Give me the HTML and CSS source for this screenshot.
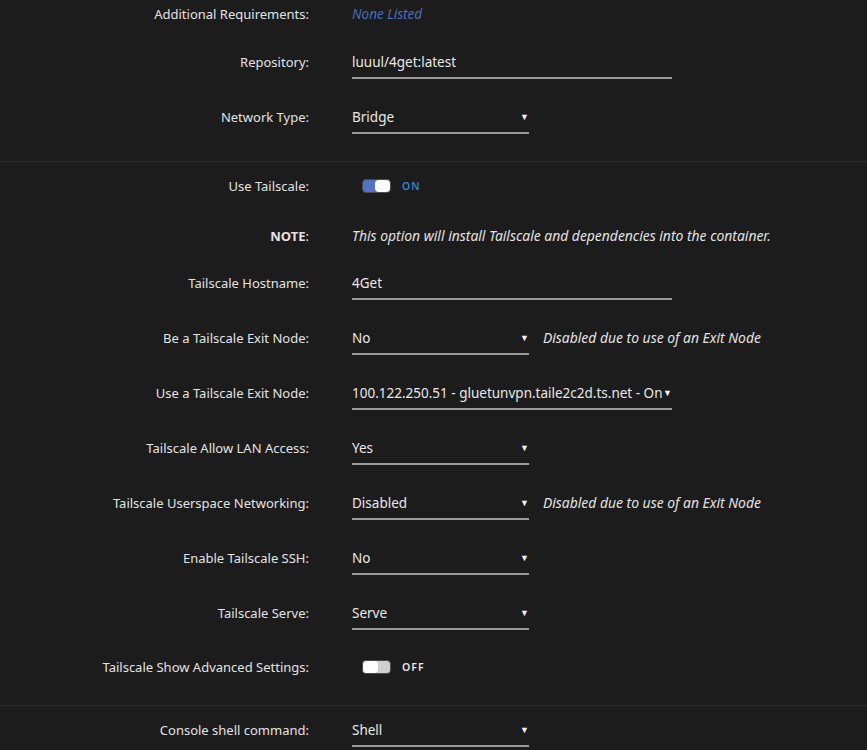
FILE: index.html
```html
<!DOCTYPE html>
<html lang="en">
<head>
    <meta charset="UTF-8">
    <title>Update Container</title>
    <link rel="stylesheet" href="styles.css">
</head>
<body>
    <form class="settings">
        <div class="row h48">
            <label class="name">Additional Requirements:</label>
            <div class="value"><span class="none-listed">None Listed</span></div>
        </div>
        <div class="row">
            <label class="name">Repository:</label>
            <div class="value"><span class="field wide">luuul/4get:latest</span></div>
        </div>
        <div class="row h54">
            <label class="name">Network Type:</label>
            <div class="value"><span class="field select">Bridge</span></div>
        </div>

        <div class="divider"></div>

        <div class="row h50">
            <label class="name">Use Tailscale:</label>
            <div class="value">
                <span class="switch on"><span class="knob"></span></span>
                <span class="switch-text on">ON</span>
            </div>
        </div>
        <div class="row h47">
            <label class="name"><b>NOTE</b>:</label>
            <div class="value"><i class="note">This option will install Tailscale and dependencies into the container.</i></div>
        </div>
        <div class="row">
            <label class="name">Tailscale Hostname:</label>
            <div class="value"><span class="field wide">4Get</span></div>
        </div>
        <div class="row">
            <label class="name">Be a Tailscale Exit Node:</label>
            <div class="value">
                <span class="field select">No</span>
                <i class="note">Disabled due to use of an Exit Node</i>
            </div>
        </div>
        <div class="row">
            <label class="name">Use a Tailscale Exit Node:</label>
            <div class="value"><span class="field select wide">100.122.250.51 - gluetunvpn.taile2c2d.ts.net - Online</span></div>
        </div>
        <div class="row">
            <label class="name">Tailscale Allow LAN Access:</label>
            <div class="value"><span class="field select">Yes</span></div>
        </div>
        <div class="row">
            <label class="name">Tailscale Userspace Networking:</label>
            <div class="value">
                <span class="field select">Disabled</span>
                <i class="note">Disabled due to use of an Exit Node</i>
            </div>
        </div>
        <div class="row">
            <label class="name">Enable Tailscale SSH:</label>
            <div class="value"><span class="field select">No</span></div>
        </div>
        <div class="row h54">
            <label class="name">Tailscale Serve:</label>
            <div class="value"><span class="field select">Serve</span></div>
        </div>
        <div class="row h48">
            <label class="name">Tailscale Show Advanced Settings:</label>
            <div class="value">
                <span class="switch"><span class="knob"></span></span>
                <span class="switch-text">OFF</span>
            </div>
        </div>

        <div class="divider"></div>

        <div class="row">
            <label class="name">Console shell command:</label>
            <div class="value"><span class="field select">Shell</span></div>
        </div>
    </form>
</body>
</html>
```

FILE: styles.css
```css
body {
    margin: 0;
    background-color: #1c1c1c;
    color: #e4e4e4;
    font-family: 'Noto Sans', 'Open Sans', sans-serif;
    font-size: 13.5px;
}

.settings {
    padding-top: 4px;
}

.row {
    display: flex;
    align-items: flex-start;
    height: 55px;
    line-height: 20px;
}

.h47 { height: 47px; }
.h48 { height: 48px; }
.h50 { height: 50px; }
.h54 { height: 54px; }

.name {
    width: 309px;
    flex-shrink: 0;
    text-align: right;
    font-size: 13px;
    color: #e2e2e2;
}

.name b {
    font-weight: bold;
}

.value {
    margin-left: 43px;
    display: flex;
    align-items: flex-start;
    white-space: nowrap;
}

.none-listed {
    color: #486dba;
    font-style: italic;
}

.note {
    color: #e2e2e2;
    font-style: italic;
    font-size: 13.9px;
}

.field {
    display: block;
    position: relative;
    width: 177px;
    padding-bottom: 5px;
    border-bottom: 2px solid #9a9a9a;
    overflow: hidden;
    white-space: nowrap;
    color: #e8e8e8;
}

.field.wide {
    width: 320px;
}

.field.select {
    margin-right: 14px;
}

.field.select::after {
    content: "\25BC";
    position: absolute;
    right: 0;
    top: 0;
    padding-left: 1px;
    font-size: 9px;
    background-color: #1c1c1c;
    color: #f0f0f0;
}

.switch {
    display: inline-block;
    position: relative;
    width: 27px;
    height: 12px;
    margin: 3px 0 0 10px;
    border: 1px solid #4a4a4a;
    border-radius: 4px;
    background-color: #cfcfcf;
}

.switch .knob {
    position: absolute;
    left: 0;
    top: 0;
    width: 15px;
    height: 12px;
    border-radius: 4px;
    background-color: #fff;
}

.switch.on {
    background-color: #5272c4;
}

.switch.on .knob {
    left: 12px;
}

.switch-text {
    margin-left: 11px;
    font-size: 10.5px;
    font-weight: 600;
    letter-spacing: 1px;
    color: #e6e6e6;
}

.switch-text.on {
    color: #2e84c9;
}

.divider {
    height: 1px;
    background-color: #2d2d2d;
    margin-bottom: 14px;
}
```
